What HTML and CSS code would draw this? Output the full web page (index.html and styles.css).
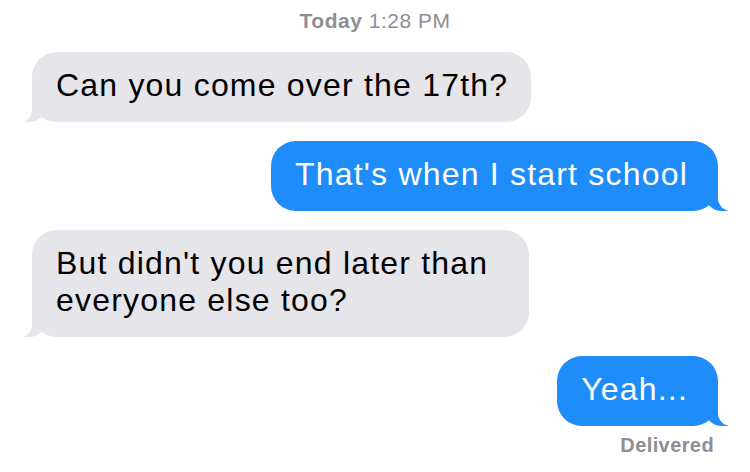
FILE: index.html
```html
<!DOCTYPE html>
<html lang="en">
<head>
<meta charset="utf-8">
<title>Messages</title>
<link rel="stylesheet" href="styles.css">
</head>
<body>
<main class="thread">
  <p class="stamp"><b>Today</b> 1:28 PM</p>
  <div class="row in"><p class="bubble in-bubble">Can you come over the 17th?</p></div>
  <div class="row out"><p class="bubble out-bubble">That's when I start school</p></div>
  <div class="row in"><p class="bubble in-bubble wide">But didn't you end later than everyone else too?</p></div>
  <div class="row out"><p class="bubble out-bubble">Yeah...</p></div>
  <p class="status">Delivered</p>
</main>
</body>
</html>
```

FILE: styles.css
```css
html, body {
  margin: 0;
  padding: 0;
  background: #ffffff;
}

body {
  font-family: "Liberation Sans", Arial, Helvetica, sans-serif;
  overflow: hidden;
}

.thread {
  display: flex;
  flex-direction: column;
  padding: 0 32px 0 32px;
}

.stamp {
  margin: 8px 0 0;
  text-align: center;
  font-size: 21px;
  line-height: 25px;
  letter-spacing: 0.5px;
  color: #8e8e93;
}

.stamp b {
  font-weight: bold;
}

.row {
  display: flex;
  margin-top: 19px;
}

.row.in {
  justify-content: flex-start;
}

.row.out {
  justify-content: flex-end;
}

.bubble {
  position: relative;
  margin: 0;
  padding: 15px 23px 18px 24px;
  font-size: 32px;
  line-height: 37px;
  letter-spacing: 1.2px;
  border-radius: 25px;
}

.bubble.wide {
  max-width: 450px;
}

.in-bubble {
  background: #e5e5ea;
  color: #000000;
}

.out-bubble {
  background: #1e8cf9;
  color: #ffffff;
  padding-right: 30px;
}

.bubble::before,
.bubble::after {
  content: "";
  position: absolute;
  bottom: 0;
  height: 24px;
}

.in-bubble::before {
  left: -9px;
  width: 24px;
  background: #e5e5ea;
  border-bottom-right-radius: 18px;
}

.in-bubble::after {
  left: -12px;
  width: 12px;
  background: #ffffff;
  border-bottom-right-radius: 12px;
}

.out-bubble::before {
  right: -10px;
  width: 24px;
  background: #1e8cf9;
  border-bottom-left-radius: 18px;
}

.out-bubble::after {
  right: -13px;
  width: 13px;
  background: #ffffff;
  border-bottom-left-radius: 13px;
}

.status {
  margin: 8px 4px 0 0;
  text-align: right;
  font-size: 20px;
  line-height: 22px;
  font-weight: bold;
  letter-spacing: 0.4px;
  color: #8e8e93;
}
```
